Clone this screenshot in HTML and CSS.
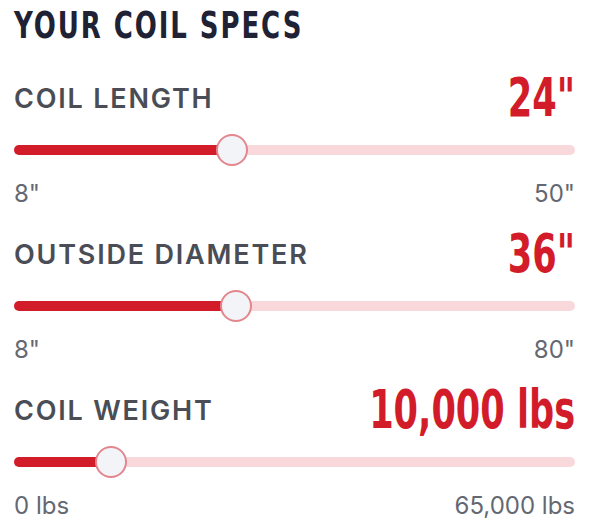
FILE: index.html
```html
<!DOCTYPE html>
<html lang="en">
<head>
  <meta charset="UTF-8" />
  <meta name="viewport" content="width=device-width, initial-scale=1.0"/>
  <title>Coil Specs</title>
  <link rel="stylesheet" href="styles.css">
</head>
<body>
  <main class="specs">
    <h2 class="specs-title">Your Coil Specs</h2>

    <!-- Coil length -->
    <section class="spec">
      <div class="spec-head">
        <span class="spec-label">Coil Length</span>
        <span class="spec-value">24"</span>
      </div>
      <div class="slider" style="--pos: 0.381">
        <div class="slider-fill"></div>
        <div class="slider-thumb"></div>
      </div>
      <div class="spec-range">
        <span>8"</span>
        <span>50"</span>
      </div>
    </section>

    <!-- Outside diameter -->
    <section class="spec">
      <div class="spec-head">
        <span class="spec-label">Outside Diameter</span>
        <span class="spec-value">36"</span>
      </div>
      <div class="slider" style="--pos: 0.389">
        <div class="slider-fill"></div>
        <div class="slider-thumb"></div>
      </div>
      <div class="spec-range">
        <span>8"</span>
        <span>80"</span>
      </div>
    </section>

    <!-- Coil weight -->
    <section class="spec">
      <div class="spec-head">
        <span class="spec-label">Coil Weight</span>
        <span class="spec-value">10,000 lbs</span>
      </div>
      <div class="slider" style="--pos: 0.154">
        <div class="slider-fill"></div>
        <div class="slider-thumb"></div>
      </div>
      <div class="spec-range">
        <span>0 lbs</span>
        <span>65,000 lbs</span>
      </div>
    </section>
  </main>
</body>
</html>
```

FILE: styles.css
```css
/* Global */
body {
  margin: 0;
  background: #ffffff;
  font-family: 'Inter', 'Liberation Sans', sans-serif;
}

.specs {
  padding: 0 16px 0 14px;
}

/* Heading - condensed heavy caps (no narrow face installed, so squeeze it) */
.specs-title {
  margin: 0;
  padding-top: 4px;
  font-family: 'DejaVu Sans Condensed', 'DejaVu Sans', sans-serif;
  font-weight: 700;
  font-size: 37px;
  line-height: 44px;
  letter-spacing: 2.5px;
  text-transform: uppercase;
  color: #1f2235;
  transform: scaleX(0.78);
  transform-origin: left center;
}

.spec {
  margin-top: 20px;
}

.spec + .spec {
  margin-top: 16px;
}

.spec-head {
  display: flex;
  justify-content: space-between;
  align-items: center;
  height: 60px;
}

.spec-label {
  font-size: 27px;
  font-weight: 600;
  letter-spacing: 1.8px;
  text-transform: uppercase;
  color: #4a4d56;
}

.spec-value {
  display: inline-block;
  font-family: 'DejaVu Sans Condensed', 'DejaVu Sans', sans-serif;
  font-weight: 700;
  font-size: 53.5px;
  line-height: 60px;
  color: #d21c2a;
  transform: scaleX(0.73);
  transform-origin: right center;
}

/* Slider - track, filled part and round thumb */
.slider {
  position: relative;
  height: 32px;
  margin-top: 6px;
}

.slider::before {
  content: "";
  position: absolute;
  left: 0;
  right: 0;
  top: 11px;
  height: 10px;
  border-radius: 5px;
  background: #f8d8db;
}

.slider-fill {
  position: absolute;
  left: 0;
  top: 11px;
  height: 10px;
  width: calc(16px + var(--pos) * (100% - 32px));
  border-radius: 5px 0 0 5px;
  background: #d21c2a;
}

.slider-thumb {
  position: absolute;
  top: 0;
  left: calc(var(--pos) * (100% - 32px));
  width: 32px;
  height: 32px;
  box-sizing: border-box;
  border-radius: 50%;
  border: 2px solid #e3868e;
  background: #f3f4f8;
}

.spec-range {
  display: flex;
  justify-content: space-between;
  margin-top: 14px;
  font-size: 24px;
  line-height: 28px;
  color: #646872;
}
```
